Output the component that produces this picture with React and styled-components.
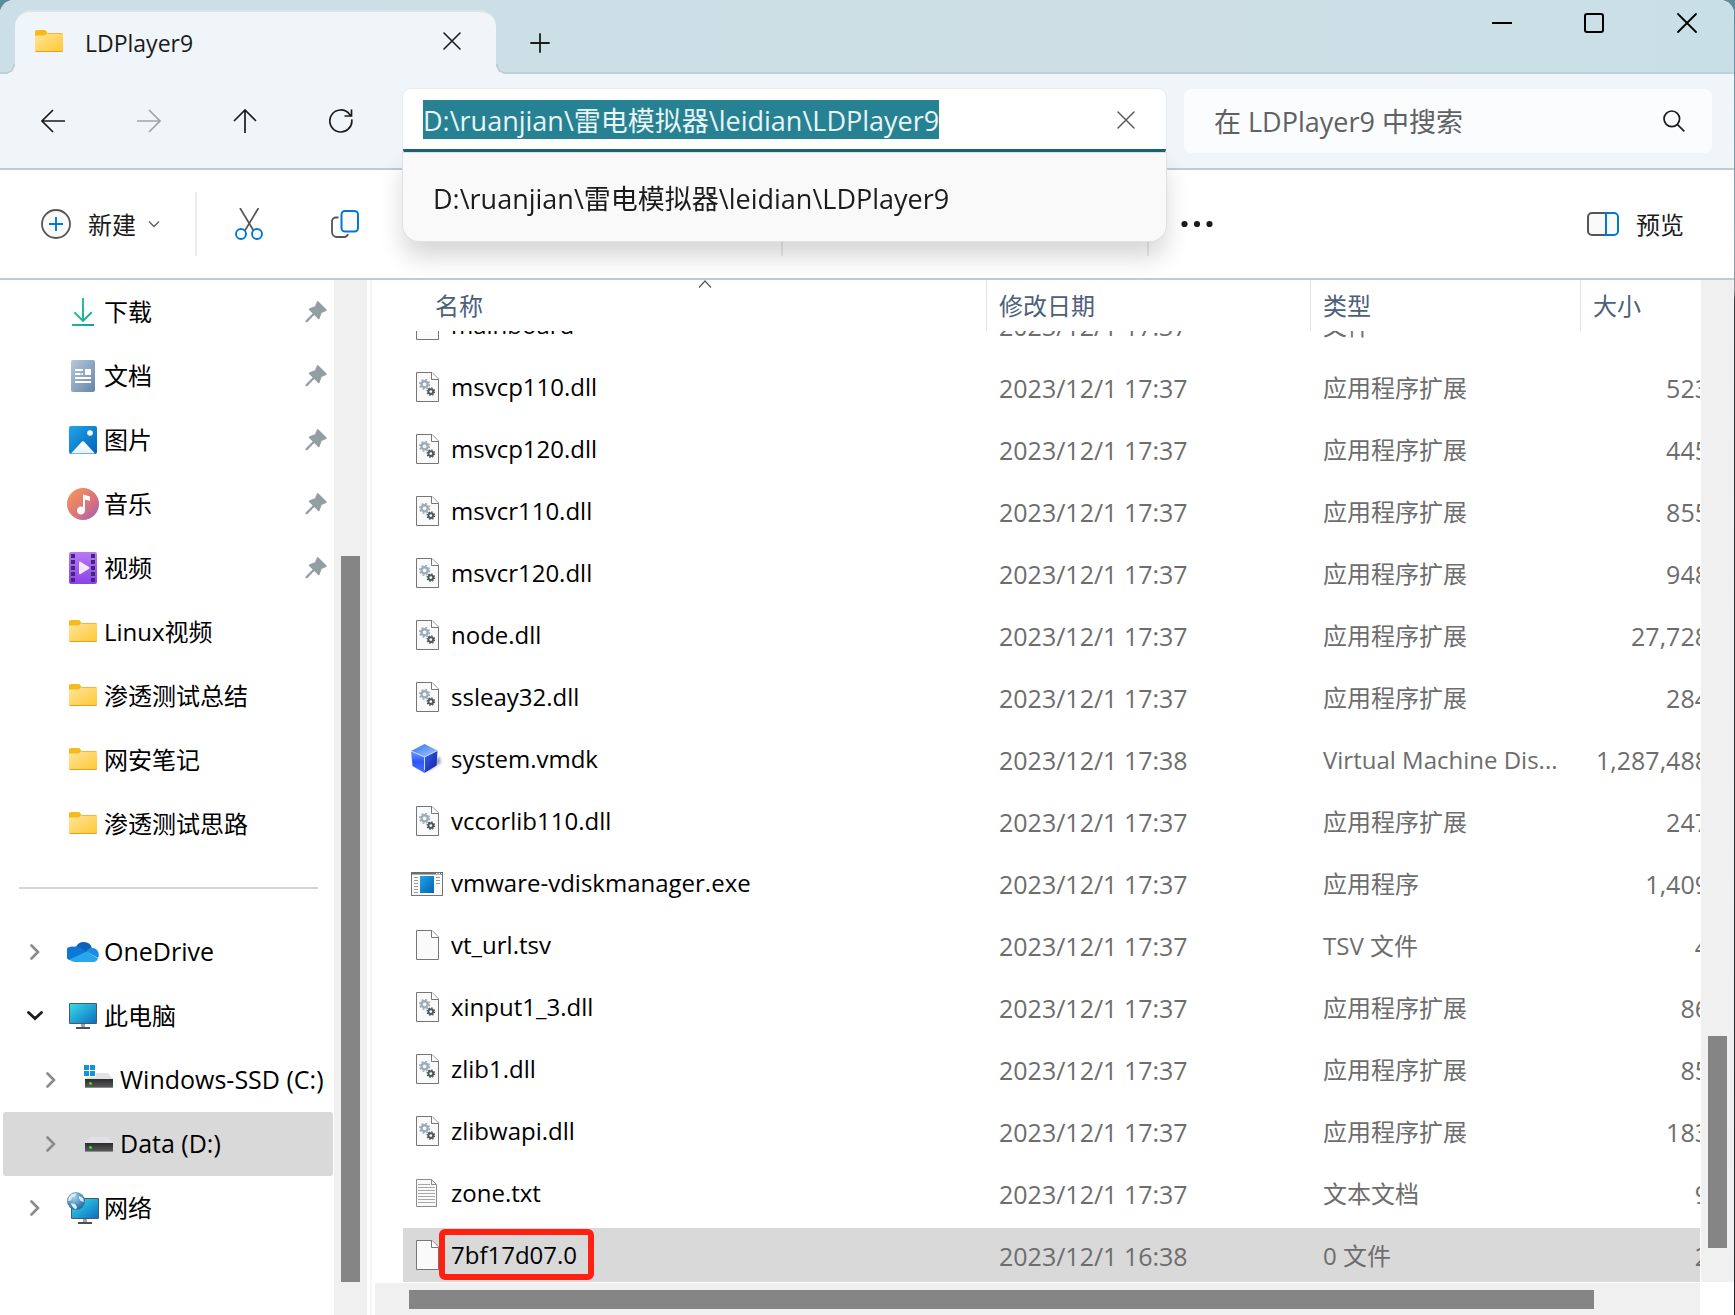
import React, { useLayoutEffect, useRef } from 'react';
import styled, { createGlobalStyle, css } from 'styled-components';

const GlobalStyle = createGlobalStyle`
  * {
    box-sizing: border-box;
  }

  body {
    margin: 0;
    background: linear-gradient(180deg, #5c8b9a 0%, #8fa6ad 18%, #8f979a 22%, #32383b 23%, #23282b 100%);
    font-family: 'Open Sans', 'Noto Sans CJK SC', sans-serif;
    font-size: 24px;
    color: #000;
  }

  button,
  input {
    font: inherit;
    color: inherit;
    border: none;
    background: none;
    padding: 0;
    margin: 0;
    outline: none;
  }
`;

const Window = styled.div`
  height: 100vh;
  margin-right: 1px;
  display: flex;
  flex-direction: column;
  overflow: hidden;
  background: #fff;
  border-radius: 14px 14px 0 0;
`;

const TitleBar = styled.header`
  display: flex;
  height: 74px;
  padding-left: 15px;
  border-bottom: 2px solid #bfd1d8;
  background: linear-gradient(90deg, #ccdfe6 0%, #cddfe5 70%, #c9dfe7 100%);
`;

const Tab = styled.div`
  position: relative;
  display: flex;
  align-items: center;
  width: 481px;
  height: 64px;
  margin-top: 10px;
  padding: 0 34px 4px 20px;
  border-radius: 16px 16px 0 0;
  border-top: 2px solid #dae5ea;
  background: #eff5f8;

  &::before,
  &::after {
    content: '';
    position: absolute;
    bottom: 0;
    width: 10px;
    height: 10px;
  }

  &::before {
    left: -10px;
    background: radial-gradient(circle at 0 0, #ccdfe6 8px, #bfd1d8 8px, #bfd1d8 10px, #eff5f8 10px);
  }

  &::after {
    right: -10px;
    background: radial-gradient(circle at 100% 0, #ccdfe6 8px, #bfd1d8 8px, #bfd1d8 10px, #eff5f8 10px);
  }
`;

const TabTitle = styled.span`
  flex: 1;
  margin-left: 22px;
  padding-top: 4px;
  font-size: 23px;
  font-weight: 500;
  color: #1b1b1b;
`;

const IconButton = styled.button`
  display: flex;
  align-items: center;
  justify-content: center;
  width: ${({ $width }) => $width || 96}px;
  height: ${({ $height }) => $height || 64}px;
  color: ${({ disabled }) => (disabled ? '#a0a4a6' : '#1b1b1b')};
`;

const NewTabButton = styled(IconButton)`
  align-self: flex-end;
`;

const WindowControls = styled.div`
  display: flex;
  margin-left: auto;
`;

const NavBar = styled.div`
  display: flex;
  align-items: center;
  height: 96px;
  padding: 0 22px 0 5px;
  border-bottom: 2px solid #bccdd5;
  background: #eff5f8;
`;

const AddressBox = styled.form`
  position: relative;
  z-index: 3;
  flex: 1;
  display: flex;
  align-items: center;
  height: 64px;
  margin: 0 18px 0 14px;
  padding: 1px 30px 0 20px;
  border-bottom: 4px solid #1c6474;
  border-radius: 8px 8px 4px 4px;
  background: #fff;
  box-shadow: 0 0 0 1px #e6ebed;
`;

const AddressInput = styled.input`
  flex: 1;
  min-width: 0;
  height: 40px;
  font-size: 27px;
  color: #1b1b1b;

  &::selection {
    color: #e9f4f6;
    background: #268292;
  }
`;

const Suggestions = styled.ul`
  position: absolute;
  top: 64px;
  left: 0;
  right: 0;
  margin: 0;
  padding: 17px 0 13px;
  list-style: none;
  border-radius: 0 0 16px 16px;
  background: #f9f9f9;
  box-shadow: 0 0 0 1px #dfe1e2, 0 16px 24px rgba(0, 0, 0, 0.16);
`;

const Suggestion = styled.li`
  padding: 0 30px;
  font-size: 27px;
  line-height: 58px;
  color: #1b1b1b;
`;

const SearchBox = styled.form`
  display: flex;
  align-items: center;
  width: 528px;
  height: 64px;
  padding: 0 27px 0 30px;
  border-radius: 8px;
  background: #fbfcfe;
`;

const SearchInput = styled.input`
  flex: 1;
  min-width: 0;
  height: 40px;
  font-size: 27px;

  &::placeholder {
    color: #5f6163;
    opacity: 1;
  }
`;

const CommandBar = styled.div`
  display: flex;
  align-items: center;
  height: 110px;
  padding-bottom: 1px;
  border-bottom: 2px solid #bccdd5;
  background: #fff;
`;

const CommandGroup = styled.div`
  display: flex;
  align-items: center;
  height: 64px;
  width: ${({ $width }) => $width}px;
  padding-left: ${({ $indent }) => $indent || 0}px;
  border-right: 2px solid #ebebeb;
`;

const CommandButton = styled.button`
  display: flex;
  align-items: center;
  height: 64px;
  color: #1b1b1b;

  span {
    margin: 0 12px 0 17px;
  }
`;

const PreviewButton = styled(CommandButton)`
  margin-left: auto;
  padding-right: 38px;
`;

const Main = styled.main`
  flex: 1;
  min-height: 0;
  display: flex;
`;

const Sidebar = styled.nav`
  width: 334px;
  overflow: hidden;

  ul {
    margin: 0;
    padding: 0;
    list-style: none;
  }
`;

const TreeButton = styled.button`
  display: flex;
  align-items: center;
  width: 330px;
  height: 64px;
  margin-left: 3px;
  padding: 0 6px 0 ${({ $level }) => ($level ? 32 : 16)}px;
  border-radius: 3px;
  text-align: left;
  white-space: nowrap;
  ${({ $selected }) => $selected && css`background: #d9d9d9;`}
`;

const Expander = styled.span`
  display: flex;
  justify-content: center;
  width: 32px;
  margin-right: 16px;
  flex-shrink: 0;
`;

const TreeLabel = styled.span`
  flex: 1;
  margin-left: 5px;
  padding-bottom: ${({ $latin }) => ($latin ? 2 : 4)}px;
  font-size: ${({ $latin }) => ($latin ? 25 : 24)}px;
`;

const Divider = styled.hr`
  margin: 31px 16px 31px 19px;
  border: none;
  border-top: 2px solid #d4d4d4;
`;

const VerticalTrack = styled.div`
  width: 33px;
  padding: 0 7px;
  background: #f0f0f0;
`;

const VerticalThumb = styled.div`
  height: ${({ $size }) => $size}%;
  background: #858585;
`;

const ThumbOffset = styled.div`
  height: ${({ $size }) => $size}%;
`;

const Splitter = styled.div`
  width: 8px;
  padding-left: 3px;

  &::before {
    content: '';
    display: block;
    width: 2px;
    height: 100%;
    background: #f5f5f5;
  }
`;

const Content = styled.section`
  flex: 1;
  min-width: 0;
  display: grid;
  grid-template-columns: 1fr 34px;
  grid-template-rows: minmax(0, 1fr) 33px;
`;

const FileScroller = styled.div`
  overflow: hidden;
  padding-left: 28px;
`;

const FileTable = styled.table`
  width: calc(100% + 21px);
  table-layout: fixed;
  border-spacing: 0;
`;

const HeaderCell = styled.th`
  position: sticky;
  top: 0;
  z-index: 1;
  width: ${({ $width }) => ($width ? `${$width}px` : 'auto')};
  height: 51px;
  padding: 0 0 0 ${({ $first }) => ($first ? 32 : 12)}px;
  border-left: ${({ $first }) => ($first ? 'none' : '1px solid #e2e2e2')};
  background: #fff;
  color: #4c607a;
  font-weight: 400;
  line-height: 50px;
  text-align: left;
`;

const SortMark = styled.span`
  position: absolute;
  top: 0;
  left: 20px;
  right: 0;
  display: flex;
  justify-content: center;
`;

const FileRow = styled.tr`
  td {
    ${({ $selected }) => $selected && css`background-color: #d9d9d9;`}
  }
`;

const Cell = styled.td`
  height: 62px;
  padding: 0 0 0 13px;
  border: solid transparent;
  border-width: 3px 0;
  background-clip: padding-box;
  color: #6d6d6d;
  font-size: 24px;
  line-height: 30px;
  white-space: nowrap;
`;

const NameCell = styled(Cell)`
  padding: 0 0 0 8px;
  color: #000;
`;

const DateCell = styled(Cell)`
  font-size: 25px;
`;

const SizeCell = styled(Cell)`
  padding: 0 12px 0 0;
  font-size: 25px;
  text-align: right;
`;

const FileName = styled.div`
  display: flex;
  align-items: center;
  gap: 8px;

  span {
    padding-bottom: 2px;
  }
`;

const MarkedName = styled.span`
  position: relative;

  &::after {
    content: '';
    position: absolute;
    inset: -11px -17px -8px -12px;
    border: 6px solid #ff2012;
    border-radius: 6px;
  }
`;

const ListTrack = styled(VerticalTrack)`
  width: 33px;
  margin-left: 1px;
`;

const HorizontalTrack = styled.div`
  height: 32px;
  margin-top: 1px;
  padding: 7px 0 6px 34px;
  background: #f0f0f0;
`;

const HorizontalThumb = styled.div`
  width: ${({ $size }) => $size}%;
  height: 19px;
  background: #858585;
`;

const Svg = ({ w, h, children, ...rest }) => (
  <svg width={w} height={h} viewBox={`0 0 ${w} ${h}`} fill="none" style={{ flexShrink: 0 }} aria-hidden="true" {...rest}>
    {children}
  </svg>
);

// Gradients shared by the coloured icons
const IconDefs = () => (
  <svg width="0" height="0" style={{ position: 'absolute' }} aria-hidden="true">
    <defs>
      <linearGradient id="folder" x1="0" y1="0" x2="1" y2="1">
        <stop offset="0" stopColor="#ffe69a" />
        <stop offset="1" stopColor="#ffc734" />
      </linearGradient>
      <linearGradient id="download" x1="0" y1="0" x2="1" y2="1">
        <stop offset="0" stopColor="#33d08a" />
        <stop offset="1" stopColor="#0f9f9f" />
      </linearGradient>
      <linearGradient id="document" x1="0" y1="0" x2="1" y2="1">
        <stop offset="0" stopColor="#b7c8dc" />
        <stop offset="1" stopColor="#6586a6" />
      </linearGradient>
      <linearGradient id="picture" x1="0" y1="0" x2="1" y2="1">
        <stop offset="0" stopColor="#1ea5ea" />
        <stop offset="1" stopColor="#0562b4" />
      </linearGradient>
      <linearGradient id="peak" x1="0" y1="0" x2="0" y2="1">
        <stop offset="0" stopColor="#fff" />
        <stop offset="1" stopColor="#e4f0fb" />
      </linearGradient>
      <linearGradient id="music" x1="0" y1="0" x2="1" y2="1">
        <stop offset="0.1" stopColor="#f5935b" />
        <stop offset="0.6" stopColor="#d7737c" />
        <stop offset="1" stopColor="#9a5fc0" />
      </linearGradient>
      <linearGradient id="video" x1="0" y1="0" x2="0" y2="1">
        <stop offset="0" stopColor="#b77af5" />
        <stop offset="1" stopColor="#8a42e6" />
      </linearGradient>
      <linearGradient id="screen" x1="0" y1="0" x2="1" y2="1">
        <stop offset="0" stopColor="#38dbe6" />
        <stop offset="1" stopColor="#0d6fc4" />
      </linearGradient>
      <linearGradient id="drive" x1="0" y1="0" x2="0" y2="1">
        <stop offset="0" stopColor="#2c2c2c" />
        <stop offset="1" stopColor="#5e5e5e" />
      </linearGradient>
      <radialGradient id="globe" cx="0.4" cy="0.3" r="0.7">
        <stop offset="0" stopColor="#9ed4ee" />
        <stop offset="1" stopColor="#22699c" />
      </radialGradient>
      <linearGradient id="cubeTop" x1="0" y1="0" x2="1" y2="1">
        <stop offset="0" stopColor="#2c6ff0" />
        <stop offset="1" stopColor="#a9ccff" />
      </linearGradient>
      <linearGradient id="cubeLeft" x1="0" y1="0" x2="0" y2="1">
        <stop offset="0" stopColor="#6f9bff" />
        <stop offset="0.5" stopColor="#2d55ff" />
        <stop offset="1" stopColor="#4d72ff" />
      </linearGradient>
      <linearGradient id="cubeRight" x1="0" y1="0" x2="1" y2="1">
        <stop offset="0" stopColor="#3c63f2" />
        <stop offset="1" stopColor="#0c1c9c" />
      </linearGradient>
      <filter id="soft" x="-0.5" y="-0.5" width="2" height="2">
        <feGaussianBlur stdDeviation="1.4" />
      </filter>
    </defs>
  </svg>
);

const FolderShape = () => (
  <>
    <path d="M0 2a2 2 0 0 1 2-2h7.5a2 2 0 0 1 1.500.7L12.500 3 10 6H0z" fill="#fab81a" />
    <path d="M0 7.500C0 6 .7 5.600 2 5.600h7c1 0 1.500-.4 2-1l.6-.8c.5-.6 1-.8 1.800-.8H26.500A1.500 1.500 0 0 1 28 4.500V21a1 1 0 0 1-1 1H1a1 1 0 0 1-1-1z" fill="url(#folder)" />
    <path d="M12.500 3.500h15" stroke="#f0b73c" />
    <path d="M.5 21.500h27" stroke="#e8a11c" />
  </>
);

const FolderIcon = () => (
  <Svg w={32} h={32}>
    <g transform="translate(2 4)">
      <FolderShape />
    </g>
  </Svg>
);

const DownloadIcon = () => (
  <Svg w={32} h={32}>
    <path d="M15 2h2v20.500l7-7 1.400 1.400L16 26.200 6.600 16.900 8 15.500l7 7zM5 28h22v2H5z" fill="url(#download)" />
  </Svg>
);

const DocumentIcon = () => (
  <Svg w={32} h={32}>
    <rect x="4" y="0" width="24" height="32" rx="2" fill="url(#document)" />
    <path d="M8 9h8v2H8zM8 13h5.500v2H8zM14.500 13H16v2h-1.500zM18 9h6v6h-6zM8 17h16v2H8zM8 21h16v2H8z" fill="#fff" />
  </Svg>
);

const PictureIcon = () => (
  <Svg w={32} h={32}>
    <rect x="2" y="2" width="28" height="28" rx="2" fill="url(#picture)" />
    <path d="M4 29.500 14.400 18.200a2.200 2.200 0 0 1 3.200 0L28 29.500z" fill="url(#peak)" />
    <circle cx="23" cy="9" r="2.800" fill="#fff" />
  </Svg>
);

const MusicIcon = () => (
  <Svg w={32} h={32}>
    <circle cx="16" cy="16" r="16" fill="url(#music)" />
    <path d="M16 6.500 23 8.500V13l-5-1.400V22.500a4 4 0 1 1-2-3.500z" fill="#fff" />
  </Svg>
);

const VideoIcon = () => (
  <Svg w={32} h={32}>
    <rect x="2" y="0" width="28" height="32" rx="2" fill="url(#video)" />
    {[2, 8, 14, 20, 26].map((y) => (
      <path key={y} d={`M4 ${y}h4v4H4zM24 ${y}h4v4h-4z`} fill="#43267a" />
    ))}
    <path d="M12 10.500c0-1 .8-1.200 1.500-.8l8.500 5.300c.8.500.8 1.300 0 1.800L13.500 22c-.7.400-1.500.2-1.500-.8z" fill="#f0e9f8" />
  </Svg>
);

const CloudIcon = () => (
  <Svg w={32} h={32}>
    <path d="M9 11a8.500 8.500 0 0 1 15.800.8L20 18z" fill="#0d62b8" />
    <path d="M7 10.700c3-.6 5 .1 7.500 1.700l6 3.600L3 24.200A7 7 0 0 1 7 10.700z" fill="#0a78d4" />
    <path d="M19 15.500c2-2.700 4-3.700 6.500-3.500A6.800 6.800 0 0 1 31 22z" fill="#1a8fe0" />
    <path d="M2.500 23.600 19.500 15.500 31 22.500A5.500 5.500 0 0 1 26.500 26H7.500a7 7 0 0 1-5-2.400z" fill="#2aa6ec" />
  </Svg>
);

const MonitorShape = () => (
  <>
    <rect x="0" y="0" width="28" height="21" rx="1" fill="#4b5963" />
    <rect x="1" y="1" width="26" height="19" fill="url(#screen)" />
    <path d="M12 21h4v3h-4z" fill="#9aa3a9" />
    <path d="M7 24h14v2H7z" fill="#4b4f55" />
  </>
);

const ComputerIcon = () => (
  <Svg w={32} h={32}>
    <g transform="translate(2 3)">
      <MonitorShape />
    </g>
  </Svg>
);

const DriveShape = () => (
  <>
    <path d="M7 9h18l5 6H2z" fill="#e0e1e5" />
    <rect x="2" y="15" width="28" height="9" fill="url(#drive)" />
    <path d="M2 23.500h28" stroke="#8d8d8d" />
    <circle cx="7.500" cy="19.500" r="1.400" fill="#3fe03a" />
  </>
);

const DriveIcon = () => (
  <Svg w={32} h={32}>
    <DriveShape />
  </Svg>
);

const SystemDriveIcon = () => (
  <Svg w={32} h={32}>
    <DriveShape />
    <path d="M0 0h13v13H0z" fill="#fff" />
    <path d="M1 1h5v5H1zM7 1h5v5H7zM1 7h5v5H1zM7 7h5v5H7z" fill="#1592dc" />
  </Svg>
);

const NetworkIcon = () => (
  <Svg w={32} h={32}>
    <g transform="translate(4 6)">
      <MonitorShape />
    </g>
    <circle cx="9" cy="9" r="9" fill="url(#globe)" />
    <path d="M2 5c2-3 5-4 8-3.500l-2 3-3 1-1 3-3 .5zM4 11l4 1 2 3-1 2.500C6 16 4.500 14 4 11zM12 4l4 2 .8 4-3-1-2-3z" fill="#dcebf2" />
  </Svg>
);

const PinIcon = () => (
  <Svg w={22} h={22}>
    <path d="M13.400.4 21.300 8.300a1 1 0 0 1-.3 1.600l-4.400 2-2 5.500a1 1 0 0 1-1.700.4L9.300 14.100 2.200 21.200H.6v-1.600L7.700 12.500 4.200 8.900a1 1 0 0 1 .4-1.700l5.400-2 1.900-4.500a1 1 0 0 1 1.500-.3z" fill="#939da4" />
  </Svg>
);

const ChevronIcon = ({ open }) =>
  open ? (
    <Svg w={16} h={10}>
      <path d="m1.500 1.500 6.500 6 6.500-6" stroke="#1b1b1b" strokeWidth="2.800" strokeLinecap="round" />
    </Svg>
  ) : (
    <Svg w={10} h={16}>
      <path d="m1.500 1.500 6.500 6.500-6.500 6.500" stroke="#8a8a8a" strokeWidth="2.600" strokeLinecap="round" />
    </Svg>
  );

const PageShape = () => (
  <>
    <path d="M5.500.5h15.500l6.500 6.500v22.500h-22z" fill="#fafafa" stroke="#767676" />
    <path d="M20.500.5v7h7" fill="#fff" stroke="#767676" />
  </>
);

const PageIcon = () => (
  <Svg w={32} h={32}>
    <PageShape />
  </Svg>
);

const DllIcon = () => (
  <Svg w={32} h={32}>
    <PageShape />
    <circle cx="13.600" cy="12.300" r="3.100" stroke="#9eabb5" strokeWidth="2.400" />
    <circle cx="13.600" cy="12.300" r="4.800" stroke="#9eabb5" strokeWidth="1.600" strokeDasharray="1.900 1.870" />
    <circle cx="19.800" cy="19.600" r="2.400" stroke="#4d575e" strokeWidth="1.900" />
    <circle cx="19.800" cy="19.600" r="3.700" stroke="#4d575e" strokeWidth="1.300" strokeDasharray="1.450 1.456" />
  </Svg>
);

const TextIcon = () => (
  <Svg w={32} h={32}>
    <path d="M5.500 1.500h15l5 5v22h-20z" fill="#fafafa" stroke="#8b8b8b" />
    <path d="M20.500 1.500v5h5" stroke="#8b8b8b" />
    <path d="M7 6.500h12M7 9.500h17M7 12.500h17M7 15.500h17M7 18.500h17M7 21.500h17M7 24.500h17" stroke="#a8a8a8" />
  </Svg>
);

const DiskIcon = () => (
  <Svg w={32} h={32}>
    <path d="M14 29 30 18.500 28 12z" fill="#39406b" opacity="0.55" filter="url(#soft)" />
    <path d="M13.500 0 26.500 6.500 13.500 13 0 7z" fill="url(#cubeTop)" />
    <path d="M0 7 13.500 13V29L1.500 22z" fill="url(#cubeLeft)" />
    <path d="M26.500 6.500 13.500 13V29l12-7.500z" fill="url(#cubeRight)" />
    <path d="m0 7 13.500 6 13-6.500M13.500 13v13" stroke="#c4dcff" />
  </Svg>
);

const ExeIcon = () => (
  <Svg w={32} h={32}>
    <rect x=".5" y="4.500" width="31" height="23" fill="#fafafa" stroke="#767676" />
    <path d="M0 5.500h32" stroke="#6a6a6a" strokeWidth="2" />
    <path d="M25 5.500h1.500M27.500 5.500H29M30 5.500h1" stroke="#fff" />
    <path d="M3 9.500h4M3 12.500h4M3 15.500h4M3 18.500h4M3 21.500h4M3 24.500h4M25 9.500h4M25 12.500h4M25 15.500h4" stroke="#9a9a9a" />
    <rect x="9" y="8" width="14" height="17" fill="url(#picture)" />
  </Svg>
);

const quickAccess = [
  { label: '下载', icon: <DownloadIcon />, pinned: true },
  { label: '文档', icon: <DocumentIcon />, pinned: true },
  { label: '图片', icon: <PictureIcon />, pinned: true },
  { label: '音乐', icon: <MusicIcon />, pinned: true },
  { label: '视频', icon: <VideoIcon />, pinned: true },
  { label: 'Linux视频', icon: <FolderIcon /> },
  { label: '渗透测试总结', icon: <FolderIcon /> },
  { label: '网安笔记', icon: <FolderIcon /> },
  { label: '渗透测试思路', icon: <FolderIcon /> }
];

const locations = [
  { label: 'OneDrive', icon: <CloudIcon />, latin: true },
  { label: '此电脑', icon: <ComputerIcon />, open: true },
  { label: 'Windows-SSD (C:)', icon: <SystemDriveIcon />, level: 1, latin: true },
  { label: 'Data (D:)', icon: <DriveIcon />, level: 1, latin: true, selected: true },
  { label: '网络', icon: <NetworkIcon /> }
];

const DLL = '应用程序扩展';

const files = [
  { name: 'mainboard', icon: <PageIcon />, type: '文件', size: '' },
  { name: 'msvcp110.dll', icon: <DllIcon />, type: DLL, size: '523' },
  { name: 'msvcp120.dll', icon: <DllIcon />, type: DLL, size: '445' },
  { name: 'msvcr110.dll', icon: <DllIcon />, type: DLL, size: '855' },
  { name: 'msvcr120.dll', icon: <DllIcon />, type: DLL, size: '948' },
  { name: 'node.dll', icon: <DllIcon />, type: DLL, size: '27,728' },
  { name: 'ssleay32.dll', icon: <DllIcon />, type: DLL, size: '284' },
  { name: 'system.vmdk', icon: <DiskIcon />, date: '2023/12/1 17:38', type: 'Virtual Machine Dis...', size: '1,287,488' },
  { name: 'vccorlib110.dll', icon: <DllIcon />, type: DLL, size: '247' },
  { name: 'vmware-vdiskmanager.exe', icon: <ExeIcon />, type: '应用程序', size: '1,409' },
  { name: 'vt_url.tsv', icon: <PageIcon />, type: 'TSV 文件', size: '4' },
  { name: 'xinput1_3.dll', icon: <DllIcon />, type: DLL, size: '86' },
  { name: 'zlib1.dll', icon: <DllIcon />, type: DLL, size: '85' },
  { name: 'zlibwapi.dll', icon: <DllIcon />, type: DLL, size: '183' },
  { name: 'zone.txt', icon: <TextIcon />, type: '文本文档', size: '9' },
  { name: '7bf17d07.0', icon: <PageIcon />, date: '2023/12/1 16:38', type: '0 文件', size: '2', selected: true }
];

const path = 'D:\\ruanjian\\雷电模拟器\\leidian\\LDPlayer9';

const CrossIcon = ({ size = 18, color = 'currentColor', strokeWidth = 1.6 }) => (
  <Svg w={size} h={size}>
    <path d={`M1 1 ${size - 1} ${size - 1}M${size - 1} 1 1 ${size - 1}`} stroke={color} strokeWidth={strokeWidth} strokeLinecap="round" />
  </Svg>
);

const TreeItem = ({ item, expandable }) => (
  <li>
    <TreeButton type="button" $level={item.level} $selected={item.selected}>
      <Expander>{expandable && <ChevronIcon open={item.open} />}</Expander>
      {item.icon}
      <TreeLabel $latin={item.latin}>{item.label}</TreeLabel>
      {item.pinned && <PinIcon />}
    </TreeButton>
  </li>
);

const App = () => {
  const addressRef = useRef(null);
  const listRef = useRef(null);

  useLayoutEffect(() => {
    addressRef.current.focus();
    addressRef.current.select();
    listRef.current.scrollTop = 36;
  }, []);

  return (
    <Window>
      <GlobalStyle />
      <IconDefs />
      <TitleBar>
        <Tab>
          <Svg w={28} h={23}>
            <FolderShape />
          </Svg>
          <TabTitle>LDPlayer9</TabTitle>
          <IconButton $width={20} $height={32} aria-label="关闭标签页">
            <CrossIcon />
          </IconButton>
        </Tab>
        <NewTabButton $width={88} $height={58} aria-label="新建标签页">
          <Svg w={20} h={20} strokeLinecap="round">
            <path d="M10 1v18M1 10h18" stroke="#1b1b1b" strokeWidth="1.800" />
          </Svg>
        </NewTabButton>
        <WindowControls>
          <IconButton $width={92} $height={46} aria-label="最小化">
            <Svg w={20} h={20}>
              <path d="M0 10h20" stroke="#000" strokeWidth="2" />
            </Svg>
          </IconButton>
          <IconButton $width={92} $height={46} aria-label="最大化">
            <Svg w={20} h={20}>
              <rect x="1" y="1" width="18" height="18" rx="2" stroke="#000" strokeWidth="2" />
            </Svg>
          </IconButton>
          <IconButton $width={94} $height={46} aria-label="关闭">
            <CrossIcon size={20} color="#000" strokeWidth={1.8} />
          </IconButton>
        </WindowControls>
      </TitleBar>

      <NavBar>
        <IconButton aria-label="后退">
          <Svg w={24} h={24}>
            <path d="M24 12H1.500M12 1 1 12l11 11" stroke="currentColor" strokeWidth="1.700" />
          </Svg>
        </IconButton>
        <IconButton aria-label="前进" disabled>
          <Svg w={24} h={24}>
            <path d="M0 12h22.500M12 1l11 11-11 11" stroke="currentColor" strokeWidth="1.700" />
          </Svg>
        </IconButton>
        <IconButton aria-label="向上">
          <Svg w={24} h={24}>
            <path d="M12 24V1.500M1 12 12 1l11 11" stroke="currentColor" strokeWidth="1.700" />
          </Svg>
        </IconButton>
        <IconButton aria-label="刷新">
          <Svg w={24} h={24}>
            <path d="M22.700 10.300A11 11 0 1 1 20.500 5.200L22 7M22.500.5V7H15.500" stroke="currentColor" strokeWidth="1.700" />
          </Svg>
        </IconButton>
        <AddressBox>
          <AddressInput ref={addressRef} aria-label="地址" defaultValue={path} spellCheck={false} />
          <IconButton type="button" $width={20} $height={40} aria-label="清除">
            <CrossIcon color="#5a5a5a" strokeWidth={1.5} />
          </IconButton>
          <Suggestions>
            <Suggestion>{path}</Suggestion>
          </Suggestions>
        </AddressBox>
        <SearchBox>
          <SearchInput aria-label="搜索" placeholder="在 LDPlayer9 中搜索" />
          <IconButton type="button" $width={22} $height={40} aria-label="搜索">
            <Svg w={22} h={22}>
              <circle cx="8.800" cy="8.800" r="7.800" stroke="currentColor" strokeWidth="1.700" />
              <path d="m14.300 14.300 7 7" stroke="currentColor" strokeWidth="1.700" />
            </Svg>
          </IconButton>
        </SearchBox>
      </NavBar>

      <CommandBar>
        <CommandGroup $width={197} $indent={41}>
          <CommandButton type="button">
            <Svg w={30} h={30}>
              <circle cx="15" cy="15" r="14" fill="#fafafa" stroke="#555" strokeWidth="1.800" />
              <path d="M15 8v14M8 15h14" stroke="#0078d4" strokeWidth="1.900" />
            </Svg>
            <span>新建</span>
            <Svg w={12} h={8}>
              <path d="m1 1.500 5 5 5-5" stroke="#5a5a5a" strokeWidth="1.300" />
            </Svg>
          </CommandButton>
        </CommandGroup>
        <CommandGroup $width={586} $indent={4}>
          <IconButton aria-label="剪切">
            <Svg w={28} h={32}>
              <path d="m5 0 13.500 22.500M23.500 0 10 22.500" stroke="#555" strokeWidth="1.700" />
              <circle cx="6" cy="26" r="5" fill="#fff" stroke="#0078d4" strokeWidth="1.900" />
              <circle cx="22" cy="26" r="5" fill="#fff" stroke="#0078d4" strokeWidth="1.900" />
            </Svg>
          </IconButton>
          <IconButton aria-label="复制">
            <Svg w={28} h={28}>
              <path d="M7.500 7.500H5A4 4 0 0 0 1 11.500V22a5 5 0 0 0 5 5h7c2 0 3.500-1 4-3" stroke="#555" strokeWidth="1.800" />
              <rect x="10.500" y="1" width="16.500" height="20.500" rx="3.500" fill="#fafafa" stroke="#0078d4" strokeWidth="2" />
            </Svg>
          </IconButton>
        </CommandGroup>
        <CommandGroup $width={366} />
        <IconButton aria-label="查看更多">
          <Svg w={32} h={8}>
            <circle cx="3.500" cy="4" r="3.100" fill="#1b1b1b" />
            <circle cx="16" cy="4" r="3.100" fill="#1b1b1b" />
            <circle cx="28.500" cy="4" r="3.100" fill="#1b1b1b" />
          </Svg>
        </IconButton>
        <PreviewButton type="button">
          <Svg w={32} h={24}>
            <path d="M19 1H5a4 4 0 0 0-4 4v14a4 4 0 0 0 4 4h14" fill="#fafafa" stroke="#555" strokeWidth="2" />
            <path d="M19 1h8a4 4 0 0 1 4 4v14a4 4 0 0 1-4 4h-8z" fill="#fafafa" stroke="#0078d4" strokeWidth="2" />
          </Svg>
          <span>预览</span>
        </PreviewButton>
      </CommandBar>

      <Main>
        <Sidebar aria-label="导航窗格">
          <ul>
            {quickAccess.map((item) => (
              <TreeItem key={item.label} item={item} />
            ))}
          </ul>
          <Divider />
          <ul>
            {locations.map((item) => (
              <TreeItem key={item.label} item={item} expandable />
            ))}
          </ul>
        </Sidebar>
        <VerticalTrack>
          <ThumbOffset $size={26.7} />
          <VerticalThumb $size={70.1} />
        </VerticalTrack>
        <Splitter />
        <Content>
          <FileScroller ref={listRef}>
            <FileTable>
              <thead>
                <tr>
                  <HeaderCell $first>
                    名称
                    <SortMark>
                      <Svg w={14} h={8}>
                        <path d="m1 7.500 6-6.500 6 6.500" stroke="#555" strokeWidth="1.200" />
                      </Svg>
                    </SortMark>
                  </HeaderCell>
                  <HeaderCell $width={324}>修改日期</HeaderCell>
                  <HeaderCell $width={270}>类型</HeaderCell>
                  <HeaderCell $width={141}>大小</HeaderCell>
                </tr>
              </thead>
              <tbody>
                {files.map((file) => (
                  <FileRow key={file.name} $selected={file.selected}>
                    <NameCell>
                      <FileName>
                        {file.icon}
                        {file.selected ? <MarkedName>{file.name}</MarkedName> : <span>{file.name}</span>}
                      </FileName>
                    </NameCell>
                    <DateCell>{file.date || '2023/12/1 17:37'}</DateCell>
                    <Cell>{file.type}</Cell>
                    <SizeCell>{file.size}</SizeCell>
                  </FileRow>
                ))}
              </tbody>
            </FileTable>
          </FileScroller>
          <ListTrack>
            <ThumbOffset $size={75.4} />
            <VerticalThumb $size={21.2} />
          </ListTrack>
          <HorizontalTrack>
            <HorizontalThumb $size={91.8} />
          </HorizontalTrack>
        </Content>
      </Main>
    </Window>
  );
};

export default App;
